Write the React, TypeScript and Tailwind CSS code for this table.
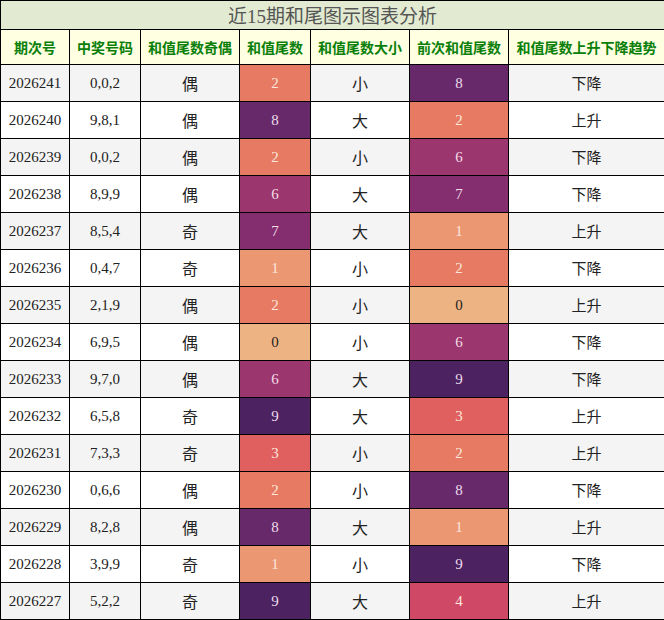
import { memo } from "react";

type Row = {
    issue: string;
    nums: string;
    parity: string;
    tail: number;
    size: string;
    prev: number;
    trend: string;
};

const rows: Row[] = [
    { issue: "2026241", nums: "0,0,2", parity: "偶", tail: 2, size: "小", prev: 8, trend: "下降" },
    { issue: "2026240", nums: "9,8,1", parity: "偶", tail: 8, size: "大", prev: 2, trend: "上升" },
    { issue: "2026239", nums: "0,0,2", parity: "偶", tail: 2, size: "小", prev: 6, trend: "下降" },
    { issue: "2026238", nums: "8,9,9", parity: "偶", tail: 6, size: "大", prev: 7, trend: "下降" },
    { issue: "2026237", nums: "8,5,4", parity: "奇", tail: 7, size: "大", prev: 1, trend: "上升" },
    { issue: "2026236", nums: "0,4,7", parity: "奇", tail: 1, size: "小", prev: 2, trend: "下降" },
    { issue: "2026235", nums: "2,1,9", parity: "偶", tail: 2, size: "小", prev: 0, trend: "上升" },
    { issue: "2026234", nums: "6,9,5", parity: "偶", tail: 0, size: "小", prev: 6, trend: "下降" },
    { issue: "2026233", nums: "9,7,0", parity: "偶", tail: 6, size: "大", prev: 9, trend: "下降" },
    { issue: "2026232", nums: "6,5,8", parity: "奇", tail: 9, size: "大", prev: 3, trend: "上升" },
    { issue: "2026231", nums: "7,3,3", parity: "奇", tail: 3, size: "小", prev: 2, trend: "上升" },
    { issue: "2026230", nums: "0,6,6", parity: "偶", tail: 2, size: "小", prev: 8, trend: "下降" },
    { issue: "2026229", nums: "8,2,8", parity: "偶", tail: 8, size: "大", prev: 1, trend: "上升" },
    { issue: "2026228", nums: "3,9,9", parity: "奇", tail: 1, size: "小", prev: 9, trend: "下降" },
    { issue: "2026227", nums: "5,2,2", parity: "奇", tail: 9, size: "大", prev: 4, trend: "上升" },
];

// heat colours per digit, light -> dark
const tailColor: Record<number, string> = {
    0: "bg-[#eeb383] text-[#222]",
    1: "bg-[#eb9772] text-[#fbe6dc]",
    2: "bg-[#e67a62] text-[#fbe6dc]",
    3: "bg-[#e0605f] text-[#fbe6dc]",
    4: "bg-[#cf4966] text-[#fbe6dc]",
    5: "bg-[#b53f6c] text-[#fbe6dc]",
    6: "bg-[#9c366f] text-[#f2dde6]",
    7: "bg-[#842e70] text-[#f2dde6]",
    8: "bg-[#68296b] text-[#eadcec]",
    9: "bg-[#4c2261] text-[#eadcec]",
};

const headers = ["期次号", "中奖号码", "和值尾数奇偶", "和值尾数", "和值尾数大小", "前次和值尾数", "和值尾数上升下降趋势"];

const cjk = "font-['Noto_Sans_CJK_SC',sans-serif]";
const serif = "font-['Liberation_Serif',serif]";

function App() {
    return (
        <div className="w-[664px] h-[620px] bg-white">
            <table className="w-[664px] border-collapse table-fixed">
                <colgroup>
                    <col className="w-[69px]" />
                    <col className="w-[71px]" />
                    <col className="w-[99px]" />
                    <col className="w-[71px]" />
                    <col className="w-[99px]" />
                    <col className="w-[99px]" />
                    <col className="w-[156px]" />
                </colgroup>
                <tbody>
                    {/* Title */}
                    <tr className="h-[29px] bg-[#e2ebd1]">
                        <td colSpan={7} className={`border border-black text-center text-[19px] leading-none text-[#555] ${cjk}`}>
                            近<span className={serif}>15</span>期和尾图示图表分析
                        </td>
                    </tr>

                    {/* Header */}
                    <tr className="h-[35px] bg-[#ffffe1]">
                        {headers.map((h) => (
                            <td key={h} className={`border border-black text-center text-[14px] font-bold text-[#0a800a] whitespace-nowrap ${cjk}`}>
                                {h}
                            </td>
                        ))}
                    </tr>

                    {rows.map((r, i) => (
                        <tr key={r.issue} className={`h-[37px] ${i % 2 === 0 ? "bg-[#f4f4f4]" : "bg-white"}`}>
                            <td className={`border border-black text-center text-[15px] text-[#222] ${serif}`}>{r.issue}</td>
                            <td className={`border border-black text-center text-[15px] text-[#222] ${serif}`}>{r.nums}</td>
                            <td className={`border border-black text-center text-[16px] text-[#222] ${cjk}`}>{r.parity}</td>
                            <td className={`border border-black text-center text-[15px] ${serif} ${tailColor[r.tail]}`}>{r.tail}</td>
                            <td className={`border border-black text-center text-[16px] text-[#222] ${cjk}`}>{r.size}</td>
                            <td className={`border border-black text-center text-[15px] ${serif} ${tailColor[r.prev]}`}>{r.prev}</td>
                            <td className={`border border-black text-center text-[15px] text-[#222] ${cjk}`}>{r.trend}</td>
                        </tr>
                    ))}
                </tbody>
            </table>
        </div>
    );
}

export default memo(App);
